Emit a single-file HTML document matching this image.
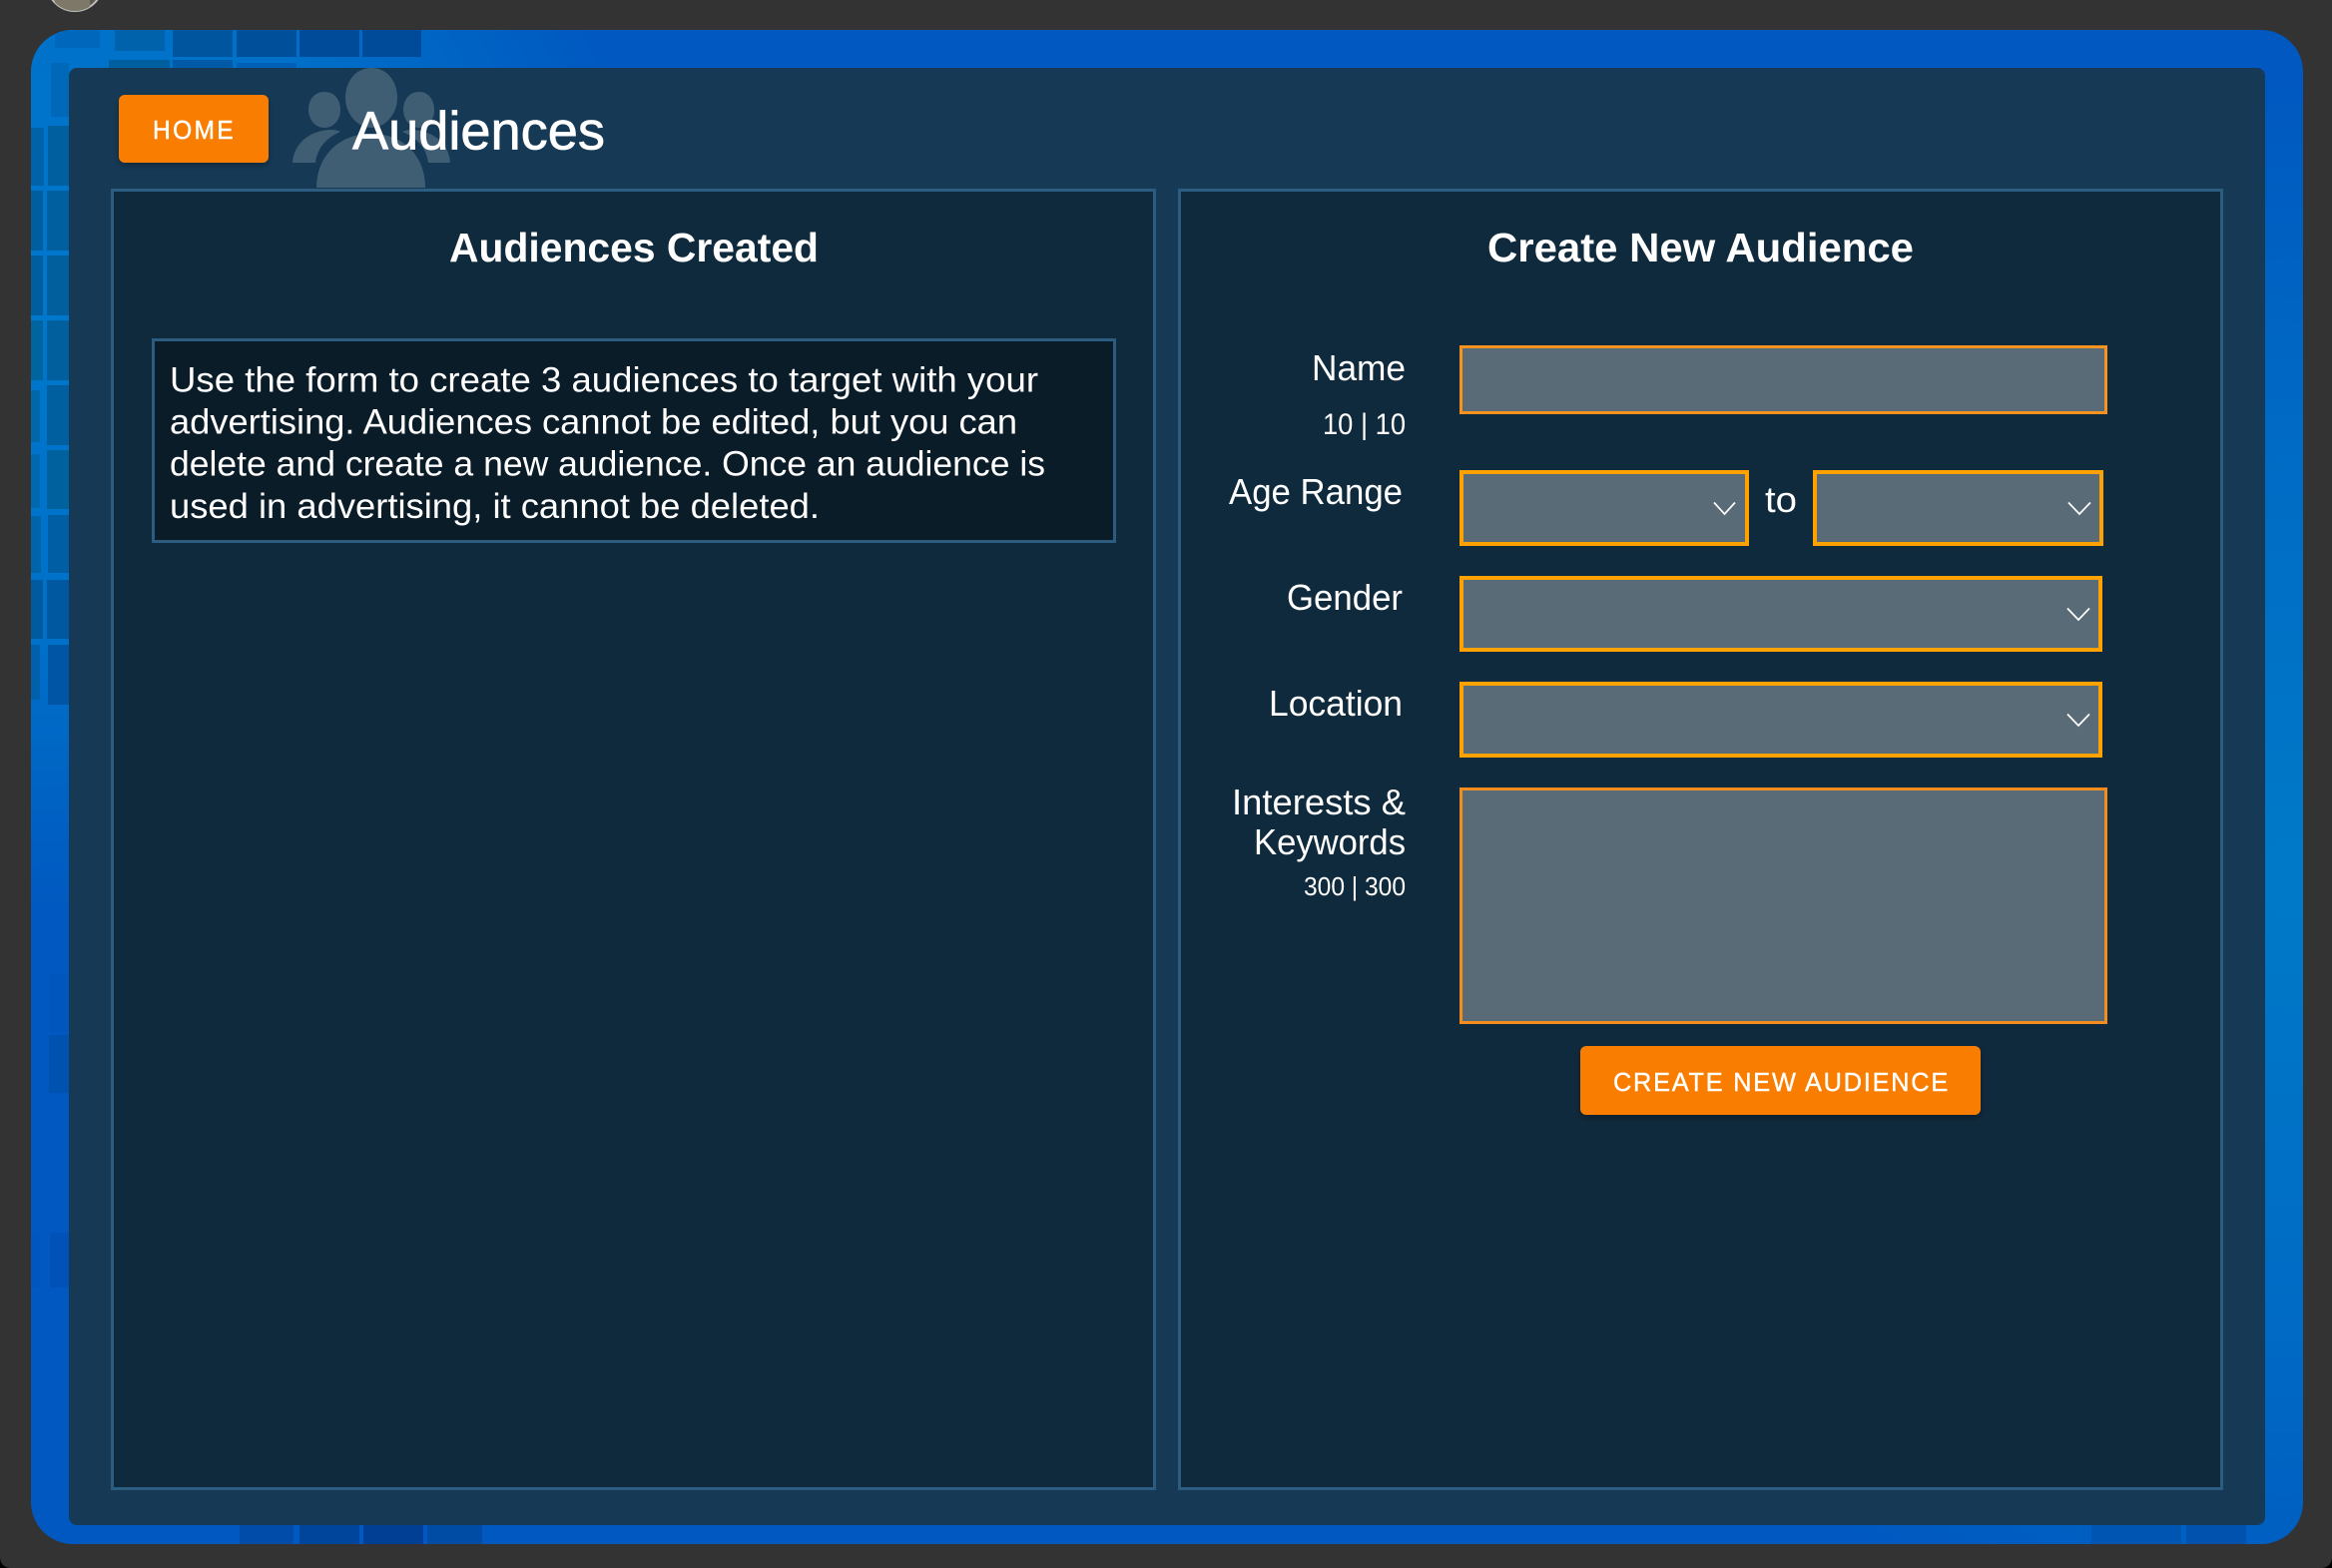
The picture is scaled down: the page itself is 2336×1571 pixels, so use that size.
<!DOCTYPE html>
<html><head><meta charset="utf-8"><title>Audiences</title>
<style>
html,body{margin:0;padding:0;background:#333;width:2336px;height:1571px;overflow:hidden}
svg{position:absolute;left:0;top:0;display:block}
text{font-family:"Liberation Sans",sans-serif;fill:#fff}
</style></head><body>
<svg width="2336" height="1571" viewBox="0 0 2336 1571" xmlns="http://www.w3.org/2000/svg">
<defs>
<radialGradient id="gl" gradientUnits="userSpaceOnUse" cx="40" cy="300" r="620"><stop offset="0" stop-color="#0078cc"/><stop offset=".55" stop-color="#0070c8"/><stop offset="1" stop-color="#0070c8" stop-opacity="0"/></radialGradient>
<radialGradient id="gr" gradientUnits="userSpaceOnUse" cx="2300" cy="880" r="800"><stop offset="0" stop-color="#007ac8"/><stop offset=".55" stop-color="#007ac8" stop-opacity=".55"/><stop offset="1" stop-color="#007ac8" stop-opacity="0"/></radialGradient>
<clipPath id="bc"><rect x="31" y="30" width="2276" height="1517" rx="42"/></clipPath>
<clipPath id="av"><circle cx="75" cy="-17" r="28"/></clipPath>
<filter id="sh" x="-10%" y="-10%" width="120%" height="130%"><feDropShadow dx="0" dy="3" stdDeviation="4" flood-color="#000" flood-opacity=".3"/></filter>
</defs>
<rect width="2336" height="1571" fill="#333"/>
<circle cx="75" cy="-17" r="28" fill="#5e5a52" stroke="#bdbdbd" stroke-width="2"/>
<rect x="55" y="0" width="35" height="11" fill="#7d7868" clip-path="url(#av)"/>
<path d="M0 1561Q1 1570 10 1571H0ZM2336 1561Q2335 1570 2326 1571H2336Z" fill="#000"/>
<g clip-path="url(#bc)">
<rect x="31" y="30" width="2276" height="1517" fill="#0058c0"/>
<rect x="31" y="30" width="2276" height="1517" fill="url(#gl)"/>
<rect x="31" y="30" width="2276" height="1517" fill="url(#gr)"/>
<!-- top tiles -->
<g>
<rect x="55" y="30" width="45" height="18" fill="#0068bc"/>
<rect x="115" y="30" width="50" height="21" fill="#0062aa"/>
<rect x="173" y="30" width="60" height="27" fill="#00559f"/>
<rect x="237" y="30" width="60" height="27" fill="#004f9b"/>
<rect x="300" y="30" width="60" height="27" fill="#004a9a"/>
<rect x="363" y="30" width="59" height="27" fill="#004a9a"/>
<rect x="109" y="60" width="61" height="8" fill="#00609f"/>
<rect x="173" y="60" width="60" height="8" fill="#005aa5"/>
<rect x="237" y="63" width="60" height="5" fill="#0060b8"/>
</g>
<!-- left tiles -->
<g>
<rect x="51" y="63" width="18" height="54" fill="#0068b8"/>
<rect x="31" y="128" width="13" height="58" fill="#0062a8"/>
<rect x="48" y="126" width="21" height="60" fill="#005f9f"/>
<rect x="31" y="191" width="12" height="60" fill="#005e9f"/>
<rect x="47" y="191" width="22" height="60" fill="#005f9f"/>
<rect x="31" y="256" width="12" height="60" fill="#005e9f"/>
<rect x="47" y="256" width="22" height="60" fill="#005f9c"/>
<rect x="31" y="321" width="12" height="60" fill="#00649f"/>
<rect x="47" y="321" width="22" height="60" fill="#005f9c"/>
<rect x="31" y="391" width="9" height="52" fill="#0068a8"/>
<rect x="47" y="386" width="22" height="60" fill="#005f9f"/>
<rect x="31" y="455" width="9" height="54" fill="#0068ae"/>
<rect x="47" y="451" width="22" height="59" fill="#00619f"/>
<rect x="31" y="517" width="10" height="57" fill="#0064aa"/>
<rect x="48" y="516" width="21" height="58" fill="#005fa4"/>
<rect x="31" y="581" width="12" height="59" fill="#005aa0"/>
<rect x="47" y="581" width="22" height="59" fill="#0058a0"/>
<rect x="31" y="646" width="9" height="55" fill="#0060ac"/>
<rect x="48" y="646" width="21" height="60" fill="#0056a4"/>
<rect x="49" y="976" width="20" height="58" fill="#0056bc"/>
<rect x="49" y="1037" width="20" height="58" fill="#0052b0"/>
<rect x="31" y="1235" width="9" height="55" fill="#0056bc"/>
<rect x="50" y="1235" width="19" height="55" fill="#0052b8"/>
</g>
<!-- bottom tiles -->
<g>
<rect x="240" y="1528" width="54" height="19" fill="#004ca8"/>
<rect x="300" y="1528" width="60" height="19" fill="#00459c"/>
<rect x="364" y="1528" width="60" height="19" fill="#003f94"/>
<rect x="428" y="1528" width="55" height="19" fill="#004ba4"/>
<rect x="2190" y="1528" width="60" height="19" fill="#0052ae"/>
<rect x="2095" y="1528" width="90" height="19" fill="#0054b2"/>
</g>
</g>
<rect x="69" y="68" width="2200" height="1460" rx="8" fill="#163a56"/>
<!-- people icon -->
<g fill="#3f5d73">
<path d="M372 68C388 68 398 82 398 98C398 114 386 128 372 128C358 128 346 114 346 98C346 82 356 68 372 68Z"/>
<path d="M325 92C335 92 341 100 341 110C341 120 334 128 325 128C316 128 309 120 309 110C309 100 315 92 325 92Z"/>
<path d="M420 92C429 92 435 100 435 110C435 120 429 128 420 128C411 128 404 120 404 110C404 100 410 92 420 92Z"/>
<path d="M317 188C317 158 338 134 372 134C406 134 426 158 426 188Z"/>
<path d="M293 163C294 143 312 130 332 130Q337 130 341 132C327 138 318 148 316 163Z"/>
<path d="M451 163C450 143 432 130 412 130Q407 130 403 132C418 138 427 148 429 163Z"/>
</g>
<!-- home button -->
<rect x="119" y="95" width="150" height="68" rx="6" fill="#f97d00" filter="url(#sh)"/>
<text x="153" y="139" font-size="26" letter-spacing="2.500" stroke="#fff" stroke-width=".5" textLength="83" lengthAdjust="spacingAndGlyphs">HOME</text>
<text x="353" y="149.500" font-size="54" stroke="#fff" stroke-width=".7" textLength="253" lengthAdjust="spacingAndGlyphs">Audiences</text>
<!-- panels -->
<rect x="112.500" y="190.500" width="1044" height="1301" fill="#102a3d" stroke="#2c5c80" stroke-width="3"/>
<rect x="1181.500" y="190.500" width="1044" height="1301" fill="#102a3d" stroke="#2c5c80" stroke-width="3"/>
<text x="450" y="262" font-size="41" font-weight="700" textLength="370" lengthAdjust="spacingAndGlyphs">Audiences Created</text>
<text x="1490" y="262" font-size="41" font-weight="700" textLength="427" lengthAdjust="spacingAndGlyphs">Create New Audience</text>
<!-- info -->
<rect x="153.500" y="340.500" width="963" height="202" fill="#0b1c29" stroke="#2c5c80" stroke-width="3"/>
<text x="170" y="392.500" font-size="35" textLength="870" lengthAdjust="spacingAndGlyphs">Use the form to create 3 audiences to target with your</text>
<text x="170" y="434.500" font-size="35" textLength="849" lengthAdjust="spacingAndGlyphs">advertising. Audiences cannot be edited, but you can</text>
<text x="170" y="476.500" font-size="35" textLength="877" lengthAdjust="spacingAndGlyphs">delete and create a new audience. Once an audience is</text>
<text x="170" y="519" font-size="35" textLength="651" lengthAdjust="spacingAndGlyphs">used in advertising, it cannot be deleted.</text>
<!-- labels -->
<text x="1314" y="381" font-size="36" textLength="94" lengthAdjust="spacingAndGlyphs">Name</text>
<text x="1325" y="435" font-size="30" textLength="83" lengthAdjust="spacingAndGlyphs">10 | 10</text>
<text x="1231" y="505" font-size="36" textLength="174" lengthAdjust="spacingAndGlyphs">Age Range</text>
<text x="1768" y="513" font-size="36" textLength="32" lengthAdjust="spacingAndGlyphs">to</text>
<text x="1289" y="611" font-size="36" textLength="116" lengthAdjust="spacingAndGlyphs">Gender</text>
<text x="1271" y="717" font-size="36" textLength="134" lengthAdjust="spacingAndGlyphs">Location</text>
<text x="1234" y="816" font-size="36" textLength="174" lengthAdjust="spacingAndGlyphs">Interests &amp;</text>
<text x="1256" y="856" font-size="36" textLength="152" lengthAdjust="spacingAndGlyphs">Keywords</text>
<text x="1306" y="897" font-size="26" textLength="102" lengthAdjust="spacingAndGlyphs">300 | 300</text>
<!-- inputs -->
<g fill="#5a6b78">
<rect x="1463.500" y="347.500" width="646" height="66" stroke="#f7931e" stroke-width="3"/>
<rect x="1464" y="473" width="286" height="72" stroke="#ffa200" stroke-width="4"/>
<rect x="1818" y="473" width="287" height="72" stroke="#ffa200" stroke-width="4"/>
<rect x="1464" y="579" width="640" height="72" stroke="#ffa200" stroke-width="4"/>
<rect x="1464" y="685" width="640" height="72" stroke="#ffa200" stroke-width="4"/>
<rect x="1463.500" y="790.500" width="646" height="234" stroke="#f58c1e" stroke-width="3"/>
</g>
<g fill="none" stroke="#fff" stroke-width="1.700">
<path d="M1717 503.500L1727.500 515L1738 503.500"/>
<path d="M2072 503.500L2083 515L2094 503.500"/>
<path d="M2071 609.500L2082 621L2093 609.500"/>
<path d="M2071 715.500L2082 727L2093 715.500"/>
</g>
<rect x="1583" y="1048" width="401" height="69" rx="6" fill="#f97d00" filter="url(#sh)"/>
<text x="1616" y="1093" font-size="26" letter-spacing="1.800" stroke="#fff" stroke-width=".4" textLength="337" lengthAdjust="spacingAndGlyphs">CREATE NEW AUDIENCE</text>
</svg>
</body></html>
